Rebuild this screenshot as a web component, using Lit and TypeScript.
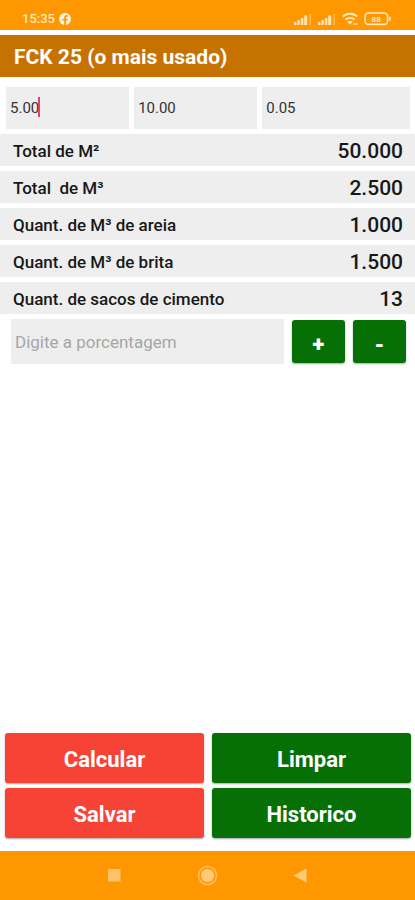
import { LitElement, html, css, svg } from "lit";
import { customElement, state } from "lit/decorators.js";

interface Result {
  label: string;
  value: string;
}

@customElement("status-bar")
class StatusBar extends LitElement {
  static styles = css`
    :host {
      display: flex;
      justify-content: space-between;
      align-items: center;
      height: 30px;
      box-sizing: border-box;
      padding: 8px 24px 0 22px;
      background: #ff9800;
      color: #ffe9c4;
      font-size: 13px;
      font-weight: 500;
      line-height: 16px;
    }
    .group {
      display: flex;
      align-items: center;
      gap: 4px;
    }
    .signals {
      gap: 6px;
    }
    svg {
      display: block;
    }
  `;

  private signal() {
    return html`<svg width="18" height="14" viewBox="0 0 18 14" aria-hidden="true">
      <g fill="#ffe3b3">
        <rect x="0" y="10" width="2.4" height="3" />
        <rect x="3.4" y="8" width="2.4" height="5" />
        <rect x="6.8" y="6" width="2.6" height="7" />
        <rect x="10.2" y="3.4" width="3" height="9.6" />
        <rect x="15.4" y="1.5" width="1.6" height="11.5" opacity=".45" />
      </g>
    </svg>`;
  }

  render() {
    return html`
      <div class="group">
        <span>15:35</span>
        <svg width="12" height="12" viewBox="0 0 12 12" aria-hidden="true">
          <circle cx="6" cy="6" r="6" fill="#fff3df" />
          <path
            d="M5.2 12V7.6H3.5V5.8h1.7V4.6c0-1.7 1-2.5 2.4-2.5h1.2v1.6H8c-.7 0-1 .4-1 1v1.1h1.8l-.3 1.8H7V12z"
            fill="#ff9800"
          />
        </svg>
      </div>
      <div class="group signals">
        ${this.signal()} ${this.signal()}
        <svg width="16" height="14" viewBox="0 0 16 14" aria-hidden="true">
          <g fill="none" stroke="#ffe9c4" stroke-width="1.8">
            <path d="M.8 4.6C4.8.8 11.2.8 15.2 4.6" />
            <path d="M3.4 7.6c2.6-2.4 6.6-2.4 9.2 0" />
          </g>
          <path d="M5.2 9.6c1.6-1.3 4-1.3 5.6 0L8 12.8z" fill="#ffe9c4" />
          <path d="M11.5 11h1.6v2h-1.6zm2.4 0h1.6v2h-1.6z" fill="#ffe3b3" />
        </svg>
        <svg width="27" height="14" viewBox="0 0 27 14" aria-hidden="true">
          <rect x="1" y="1" width="22.6" height="11.4" rx="3.4" fill="none" stroke="#ffe9c4" stroke-width="1.6" />
          <rect x="25" y="4.6" width="1.8" height="4.4" rx=".8" fill="#ffe9c4" />
          <text x="12.2" y="9.8" text-anchor="middle" font-size="8" font-weight="700" fill="#ffe9c4">88</text>
        </svg>
      </div>
    `;
  }
}

@customElement("nav-bar")
class NavBar extends LitElement {
  static styles = css`
    :host {
      display: flex;
      justify-content: center;
      align-items: center;
      gap: 68px;
      height: 49px;
      background: #ff9800;
    }
    button {
      display: grid;
      place-items: center;
      width: 25px;
      height: 25px;
      padding: 0;
      border: 0;
      background: none;
    }
    svg {
      display: block;
    }
  `;

  private key(label: string, shape: unknown) {
    return html`<button aria-label=${label}>
      <svg width="21" height="21" viewBox="0 0 21 21">${shape}</svg>
    </button>`;
  }

  render() {
    return html`
      ${this.key("Recentes", svg`<rect x="4" y="4" width="12.5" height="12.5" fill="#ffc36b" />`)}
      ${this.key(
        "Início",
        svg`<circle cx="10.5" cy="10.5" r="9" fill="none" stroke="#ffbe60" stroke-width="1.6" />
          <circle cx="10.5" cy="10.5" r="6.6" fill="#ffc978" />`
      )}
      ${this.key("Voltar", svg`<path d="M3.5 10.5 16.5 3.5v14z" fill="#ffc978" />`)}
    `;
  }
}

@customElement("app-root")
class AppRoot extends LitElement {
  static styles = css`
    :host {
      display: flex;
      flex-direction: column;
      min-height: 100vh;
      background: #fff;
      color: #181818;
      font-family: Roboto, "Liberation Sans", sans-serif;
    }
    h1 {
      margin: 5px 0 0;
      padding: 2px 14px 0;
      background: #c67200;
      color: #fff;
      font-size: 21px;
      line-height: 40px;
      font-weight: 700;
    }
    main {
      flex: 1;
      display: flex;
      flex-direction: column;
    }
    .sizes {
      display: grid;
      grid-template-columns: 5fr 5fr 6fr;
      gap: 5px;
      padding: 10px 5px 5px 6px;
    }
    .field {
      position: relative;
      display: flex;
    }
    input {
      width: 100%;
      min-width: 0;
      height: 42px;
      box-sizing: border-box;
      border: 0;
      border-radius: 0;
      outline: 0;
      padding: 0 4px;
      background: #eee;
      color: #333;
      font-family: inherit;
      font-size: 15px;
    }
    .caret {
      position: absolute;
      left: 32px;
      top: 10px;
      width: 2px;
      height: 20px;
      background: #e83a78;
    }
    .results {
      display: grid;
      gap: 5px;
      margin: 0;
    }
    .row {
      display: flex;
      justify-content: space-between;
      padding: 2px 12px 0 13px;
      background: #eee;
      line-height: 30px;
    }
    dt {
      font-size: 17px;
      font-weight: 500;
      white-space: pre;
    }
    dd {
      margin: 0;
      font-size: 21px;
      font-weight: 500;
    }
    .percent {
      display: grid;
      grid-template-columns: 1fr 53px 53px;
      gap: 8px;
      align-items: center;
      padding: 5px 9px 0 11px;
    }
    .percent input {
      height: 45px;
      font-size: 17px;
    }
    .percent input::placeholder {
      color: #a6a6a6;
      opacity: 1;
    }
    button {
      border: 0;
      border-radius: 3px;
      padding: 2px 0 0;
      background: #067006;
      color: #fff;
      font-family: inherit;
      font-size: 22px;
      font-weight: 700;
      box-shadow: 0 1px 2px rgba(0, 0, 0, 0.35);
    }
    .step {
      height: 43px;
      padding-top: 6px;
      font-weight: 900;
    }
    .actions {
      display: grid;
      grid-template-columns: 1fr 1fr;
      grid-auto-rows: 50px;
      gap: 5px 8px;
      margin-top: auto;
      padding: 24px 4px 13px 5px;
    }
    .red {
      background: #f74336;
    }
  `;

  @state() private sizes = [
    { label: "Largura", value: "5.00" },
    { label: "Comprimento", value: "10.00" },
    { label: "Espessura", value: "0.05" },
  ];

  @state() private results: Result[] = [
    { label: "Total de M²", value: "50.000" },
    { label: "Total  de M³", value: "2.500" },
    { label: "Quant. de M³ de areia", value: "1.000" },
    { label: "Quant. de M³ de brita", value: "1.500" },
    { label: "Quant. de sacos de cimento", value: "13" },
  ];

  render() {
    return html`
      <status-bar></status-bar>
      <h1>FCK 25 (o mais usado)</h1>
      <main>
        <div class="sizes">
          ${this.sizes.map(
            (s, i) => html`<div class="field">
              <input aria-label=${s.label} inputmode="decimal" .value=${s.value} />
              ${i === 0 ? html`<span class="caret"></span>` : ""}
            </div>`
          )}
        </div>
        <dl class="results">
          ${this.results.map((r) => html`<div class="row"><dt>${r.label}</dt><dd>${r.value}</dd></div>`)}
        </dl>
        <div class="percent">
          <input aria-label="Porcentagem" placeholder="Digite a porcentagem" />
          <button class="step">+</button>
          <button class="step">-</button>
        </div>
        <div class="actions">
          <button class="red">Calcular</button>
          <button>Limpar</button>
          <button class="red">Salvar</button>
          <button>Historico</button>
        </div>
      </main>
      <nav-bar></nav-bar>
    `;
  }
}
